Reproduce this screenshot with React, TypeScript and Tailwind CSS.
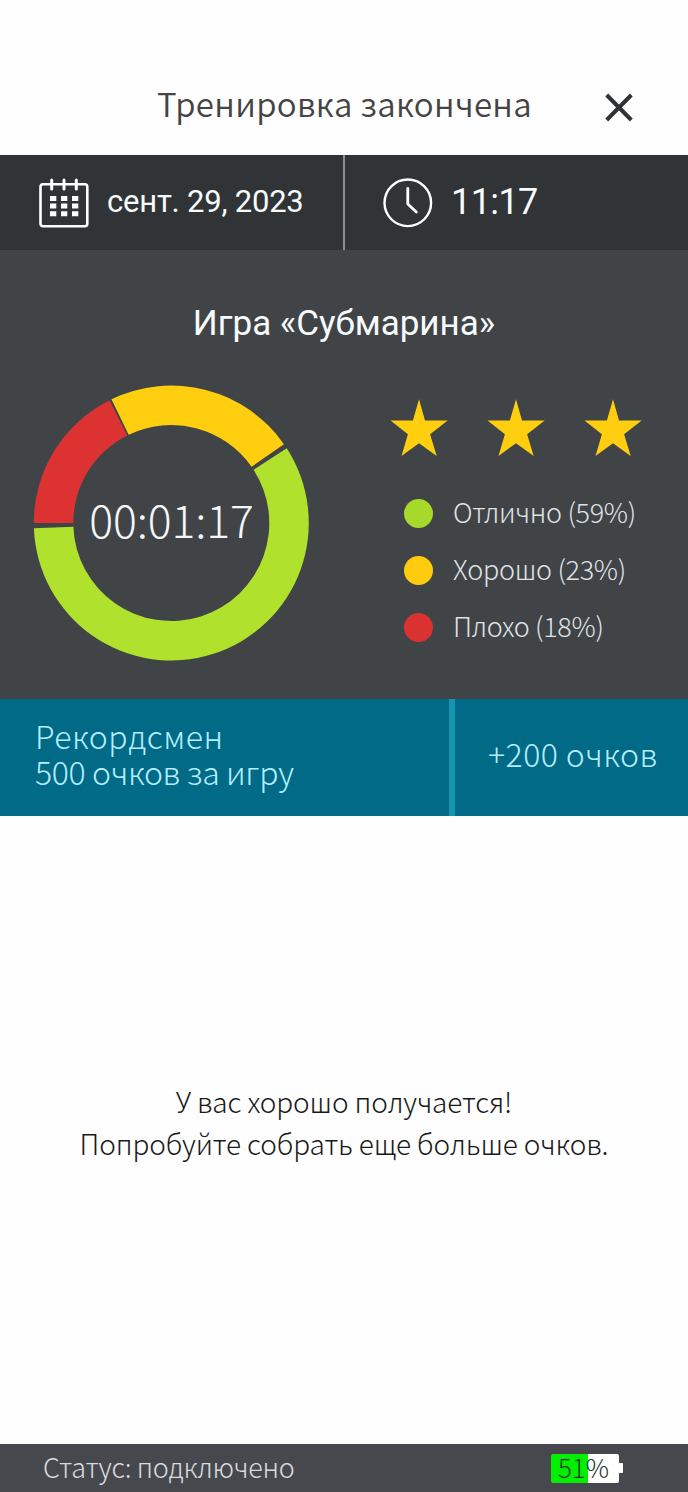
type Segment = { color: string; from: number; to: number };

const segments: Segment[] = [
  { color: "#dc3231", from: 180, to: 116.7 },
  { color: "#ffce0f", from: 115.8, to: 35 },
  { color: "#afe12d", from: 32.9, to: -177.8 },
];

const legend = [
  { label: "Отлично (59%)", dot: "bg-[#a6d929]" },
  { label: "Хорошо (23%)", dot: "bg-[#ffcb0f]" },
  { label: "Плохо (18%)", dot: "bg-[#d93230]" },
];

const light = "font-['Noto_Sans_CJK_SC',sans-serif] font-light";

function point(radius: number, angle: number) {
  const rad = (angle * Math.PI) / 180;
  return `${(138.3 + radius * Math.cos(rad)).toFixed(2)} ${(138 - radius * Math.sin(rad)).toFixed(2)}`;
}

function arc({ from, to }: Segment) {
  const large = from - to > 180 ? 1 : 0;
  return `M${point(137.5, from)} A137.5 137.5 0 ${large} 1 ${point(137.5, to)} L${point(98, to)} A98 98 0 ${large} 0 ${point(98, from)}Z`;
}

function CalendarIcon() {
  return (
    <svg width="50" height="50" viewBox="0 0 50 50" fill="none" stroke="#fff">
      <rect x="1.5" y="6.3" width="46.8" height="41.9" rx="2.5" strokeWidth="2.6" />
      <path d="M12.7 2v9M25 2v9M37.3 2v9" strokeWidth="3" strokeLinecap="round" />
      <path
        d="M11 20.5h6.3M22 20.5h6.3M33 20.5h6.3M11 28h6.3M22 28h6.3M33 28h6.3M11 35.7h6.3M22 35.7h6.3M33 35.7h6.3"
        strokeWidth="5"
      />
    </svg>
  );
}

function ClockIcon() {
  return (
    <svg width="50" height="50" viewBox="0 0 50 50" fill="none" stroke="#fff" strokeLinecap="round" strokeLinejoin="round">
      <circle cx="24.8" cy="24.8" r="23.3" strokeWidth="2.4" />
      <path d="M24.8 10.3V26l8.5 8" strokeWidth="2.8" />
    </svg>
  );
}

function Star() {
  return (
    <svg width="58" height="58" viewBox="0 0 58 58" fill="#ffce0f">
      <path d="M29 .3 35 21.5H57.7L40.1 35.3 46.7 57 29 44.2 11.5 57 17.9 35.3.5 21.5H22.9Z" />
    </svg>
  );
}

function Donut() {
  return (
    <div className="relative h-[276px] w-[276px]">
      <svg width="276" height="276" viewBox="0 0 276 276">
        {segments.map((s) => (
          <path key={s.color} d={arc(s)} fill={s.color} />
        ))}
      </svg>
      <span
        className={`absolute inset-0 flex items-center justify-center pb-[8px] pl-px text-[44.6px] tracking-[-0.1px] text-[#f3f7fa] ${light}`}
      >
        00:01:17
      </span>
    </div>
  );
}

export default function App() {
  return (
    <div className="flex h-[1492px] w-[688px] flex-col bg-[#fefefe]">
      <header className="flex h-[155px] items-start pl-[157px] pt-[79px]">
        <h1 className="w-[448px] whitespace-nowrap font-['Noto_Sans_CJK_SC',sans-serif] text-[33px] font-[350] leading-[48px] tracking-[0.32px] text-[#444]">
          Тренировка закончена
        </h1>
        <button className="mt-[14px]" aria-label="Закрыть">
          <svg width="28" height="29" viewBox="0 0 28 29" stroke="#303334" strokeWidth="4">
            <path d="M1.7 2 26.3 27M26.3 2 1.7 27" />
          </svg>
        </button>
      </header>

      {/* Date and time */}
      <section className="flex h-[95px] bg-[#303436] font-[Roboto,sans-serif] text-[#f8fbfd]">
        <div className="flex w-[345px] border-r-2 border-[#8b8f91] pl-[39px] pt-[23px]">
          <CalendarIcon />
          <span className="ml-[18px] whitespace-nowrap text-[31px] leading-[48px] tracking-[-0.22px]">сент. 29, 2023</span>
        </div>
        <div className="flex pl-[38px] pt-[23px]">
          <ClockIcon />
          <span className="ml-[18px] whitespace-nowrap text-[36px] leading-[48px] tracking-[-0.6px]">11:17</span>
        </div>
      </section>

      {/* Game result */}
      <section className="flex h-[449px] flex-col bg-[#414447]">
        <h2 className="pt-[50px] text-center font-[Roboto,sans-serif] text-[35px] font-normal leading-[48px] text-[#f8fbfd]">
          Игра «Субмарина»
        </h2>
        <div className="flex pl-[33px] pt-[37px]">
          <Donut />
          <div className="ml-[81px] pt-[14px]">
            <div className="flex gap-[39px]">
              <Star />
              <Star />
              <Star />
            </div>
            <ul className="ml-[14px] mt-[28px]">
              {legend.map((item) => (
                <li key={item.label} className="flex h-[57px] items-center">
                  <span className={`h-[29px] w-[29px] rounded-full ${item.dot}`} />
                  <span
                    className={`ml-[20px] whitespace-nowrap pb-[2px] text-[27px] tracking-[-0.32px] text-[#dfe2e5] ${light}`}
                  >
                    {item.label}
                  </span>
                </li>
              ))}
            </ul>
          </div>
        </div>
      </section>

      {/* Achievement */}
      <section className={`flex h-[117px] bg-[#006a87] text-[32px] text-[#b5edfb] ${light}`}>
        <div className="w-[455px] whitespace-nowrap border-r-6 border-[#1894b3] pl-[35px] pt-[18px] leading-[36px]">
          <p className="tracking-[0.5px]">Рекордсмен</p>
          <p className="tracking-[-0.35px]">500 очков за игру</p>
        </div>
        <div className="whitespace-nowrap pl-[33px] pt-[30px] leading-[48px] tracking-[0.45px]">+200 очков</div>
      </section>

      <main
        className={`flex-1 pt-[264px] text-center text-[28px] leading-[42px] tracking-[-0.14px] text-[#191919] ${light}`}
      >
        <p>У вас хорошо получается!</p>
        <p>Попробуйте собрать еще больше очков.</p>
      </main>

      <footer className={`flex h-[48px] items-center bg-[#46484e] pl-[43px] text-[27px] text-[#d8dbde] ${light}`}>
        <span className="w-[508px] whitespace-nowrap pb-[2px] tracking-[-0.28px]">Статус: подключено</span>
        <div className="flex h-[29px] w-[68px] items-center justify-center rounded-[2px] bg-linear-to-r from-[#00f000] from-55% to-white to-55% pb-[2px] pr-[3px] text-[26px] leading-none text-[#26382b]">
          51%
        </div>
        <span className="h-[10px] w-[4px] rounded-r-[1px] bg-white" />
      </footer>
    </div>
  );
}
